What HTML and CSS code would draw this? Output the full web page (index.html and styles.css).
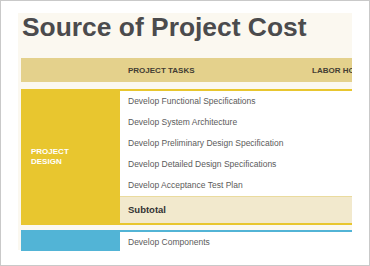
FILE: index.html
```html
<!DOCTYPE html>
<html>
<head>
<meta charset="utf-8">
<link rel="stylesheet" href="styles.css">
</head>
<body>
<div class="frame">
  <div class="page">
    <h1 class="title">Source of Project Cost</h1>
    <div class="table-wrap">
      <div class="table">
        <div class="thead">
          <div class="th th-label"></div>
          <div class="th th-task">PROJECT TASKS</div>
          <div class="th th-hours">LABOR HOURS</div>
        </div>
        <div class="group group-yellow">
          <div class="label">PROJECT<br>DESIGN</div>
          <div class="rows">
            <div class="row">Develop Functional Specifications</div>
            <div class="row">Develop System Architecture</div>
            <div class="row">Develop Preliminary Design Specification</div>
            <div class="row">Develop Detailed Design Specifications</div>
            <div class="row">Develop Acceptance Test Plan</div>
            <div class="row subtotal">Subtotal</div>
          </div>
        </div>
        <div class="group group-blue">
          <div class="label"></div>
          <div class="rows">
            <div class="row">Develop Components</div>
          </div>
        </div>
      </div>
    </div>
  </div>
</div>
</body>
</html>
```

FILE: styles.css
```css
html, body {
  margin: 0;
  padding: 0;
  background: #ffffff;
}

.frame {
  width: 370px;
  height: 266px;
  box-sizing: border-box;
  border: 1px solid #c9c9c9;
  background: #ffffff;
  padding: 13px 0 0 17px;
  overflow: hidden;
}

.page {
  width: 334px;
  height: 237px;
  background: #fbf8f0;
  font-family: "Liberation Sans", Arial, sans-serif;
}

.title {
  margin: -1px 0 17px 0;
  padding-left: 4px;
  font-size: 26.4px;
  line-height: 28px;
  font-weight: bold;
  color: #4b4b4d;
  white-space: nowrap;
}

.table-wrap {
  margin-left: 3px;
  width: 331px;
  height: 193px;
  overflow: hidden;
}

.table {
  width: 420px;
}

.thead {
  display: flex;
  height: 24px;
  background: #e4d18c;
  align-items: center;
}

.th {
  font-size: 8px;
  font-weight: bold;
  color: #433d33;
  white-space: nowrap;
}

.th-label {
  width: 99px;
  flex: none;
}

.th-task {
  width: 184px;
  flex: none;
  padding-left: 8px;
  box-sizing: border-box;
}

.th-hours {
  padding-left: 8px;
}

.group {
  display: flex;
}

.group-yellow {
  margin-top: 7px;
}

.group-blue {
  margin-top: 5px;
}

.label {
  width: 99px;
  flex: none;
  display: flex;
  align-items: center;
  box-sizing: border-box;
  padding-left: 10px;
  color: #ffffff;
  font-size: 8px;
  font-weight: bold;
  line-height: 10px;
}

.group-yellow .label {
  background: #e8c62f;
}

.group-blue .label {
  background: #52b4d6;
}

.rows {
  flex: 1;
  background: #ffffff;
}

.group-yellow .rows {
  border-top: 2px solid #e8c62f;
}

.group-blue .rows {
  border-top: 2px solid #52b4d6;
}

.row {
  height: 21px;
  line-height: 21px;
  padding-left: 8px;
  font-size: 8.5px;
  color: #5b5b5b;
  white-space: nowrap;
}

.subtotal {
  height: 26px;
  line-height: 26px;
  background: #f2e9cd;
  border-top: 1px solid #eadb9e;
  border-bottom: 2px solid #e8c62f;
  font-size: 9.5px;
  font-weight: bold;
  color: #333333;
}
```
